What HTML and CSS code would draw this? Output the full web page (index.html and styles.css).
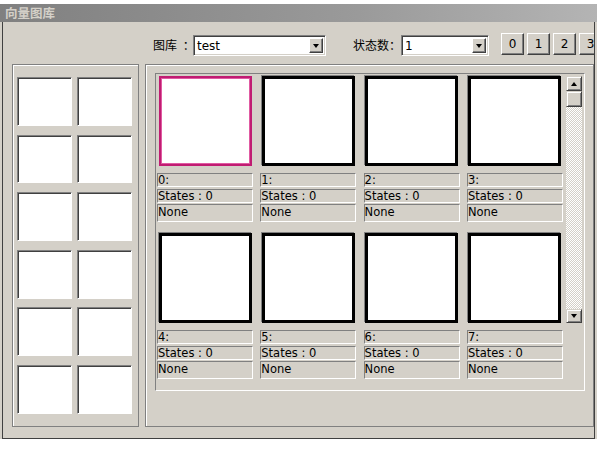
FILE: index.html
```html
<!DOCTYPE html>
<html lang="zh">
<head>
<meta charset="utf-8">
<title>向量图库</title>
<link rel="stylesheet" href="styles.css">
</head>
<body>
<div class="topstrip"></div>
<div class="window">
  <div class="titlebar"><span class="title">向量图库</span></div>
  <div class="client">
    <div class="toolbar">
      <span class="lbl lbl-lib">图库 ：</span>
      <div class="select sel-lib"><span class="sel-text">test</span><span class="sel-btn"><span class="tri-down"></span></span></div>
      <span class="lbl lbl-state">状态数：</span>
      <div class="select sel-state"><span class="sel-text">1</span><span class="sel-btn"><span class="tri-down"></span></span></div>
      <div class="btns">
        <button class="btn">0</button>
        <button class="btn">1</button>
        <button class="btn">2</button>
        <button class="btn">3</button>
      </div>
    </div>
    <div class="panels">
      <div class="group left">
        <div class="tiles">
          <div class="tile"></div><div class="tile"></div>
          <div class="tile"></div><div class="tile"></div>
          <div class="tile"></div><div class="tile"></div>
          <div class="tile"></div><div class="tile"></div>
          <div class="tile"></div><div class="tile"></div>
          <div class="tile"></div><div class="tile"></div>
        </div>
      </div>
      <div class="group right">
        <div class="frame">
          <div class="cards">
            <div class="card"><div class="thumb selected"></div><div class="cl c1">0:</div><div class="cl c2">States : 0</div><div class="cl c3">None</div></div>
            <div class="card"><div class="thumb"></div><div class="cl c1">1:</div><div class="cl c2">States : 0</div><div class="cl c3">None</div></div>
            <div class="card"><div class="thumb"></div><div class="cl c1">2:</div><div class="cl c2">States : 0</div><div class="cl c3">None</div></div>
            <div class="card"><div class="thumb"></div><div class="cl c1">3:</div><div class="cl c2">States : 0</div><div class="cl c3">None</div></div>
            <div class="card"><div class="thumb"></div><div class="cl c1">4:</div><div class="cl c2">States : 0</div><div class="cl c3">None</div></div>
            <div class="card"><div class="thumb"></div><div class="cl c1">5:</div><div class="cl c2">States : 0</div><div class="cl c3">None</div></div>
            <div class="card"><div class="thumb"></div><div class="cl c1">6:</div><div class="cl c2">States : 0</div><div class="cl c3">None</div></div>
            <div class="card"><div class="thumb"></div><div class="cl c1">7:</div><div class="cl c2">States : 0</div><div class="cl c3">None</div></div>
          </div>
          <div class="scrollbar">
            <div class="sb-btn sb-up"><span class="tri-up"></span></div>
            <div class="sb-thumb"></div>
            <div class="sb-track"></div>
            <div class="sb-btn sb-down"><span class="tri-down"></span></div>
          </div>
        </div>
      </div>
    </div>
  </div>
</div>
</body>
</html>
```
FILE: styles.css
```css
* { box-sizing: border-box; }
html, body { margin: 0; padding: 0; background: #fff; }
body {
  width: 597px;
  height: 457px;
  overflow: hidden;
  font-family: "DejaVu Sans", "Noto Sans CJK SC", sans-serif;
  font-size: 11px;
  color: #000;
}
.topstrip { height: 4px; background: #fff; }
.window { width: 597px; background: #d4d0c8; }
.titlebar {
  height: 18px;
  background: linear-gradient(to right, #808080 0%, #9a9a9a 60%, #b4b4b4 100%);
  display: flex;
  align-items: center;
  padding-left: 5px;
}
.title {
  font-family: "Noto Sans CJK SC", sans-serif;
  font-weight: bold;
  font-size: 12.5px;
  color: #d4d0c8;
  line-height: 18px;
}
.client {
  margin: 0 2px 0 2px;
  border-left: 1px solid #404040;
  border-right: 1px solid #404040;
  border-bottom: 1px solid #404040;
  padding: 11px 0 11px 9px;
  overflow: hidden;
  height: 417px;
}
.toolbar {
  display: flex;
  align-items: flex-start;
  height: 23px;
  margin-left: 141px;
  white-space: nowrap;
}
.toolbar > * { flex-shrink: 0; }
.lbl {
  font-family: "Noto Sans CJK SC", sans-serif;
  font-size: 12px;
  line-height: 16px;
  margin-top: 4px;
}
.lbl-lib { width: 40px; word-spacing: 3px; }
.lbl-state { width: 48px; margin-left: 27px; }
.select {
  margin-top: 2px;
  height: 21px;
  background: #fff;
  border: 1px solid;
  border-color: #808080 #fff #fff #808080;
  box-shadow: inset 1px 1px 0 #404040, inset -1px -1px 0 #d4d0c8;
  display: flex;
  align-items: stretch;
  padding: 2px;
}
.sel-lib { width: 133px; }
.sel-state { width: 88px; }
.sel-text {
  flex: 1;
  font-size: 12px;
  line-height: 16px;
  padding-left: 1px;
}
.sel-btn {
  width: 14px;
  background: #d4d0c8;
  border: 1px solid;
  border-color: #fff #404040 #404040 #fff;
  box-shadow: inset -1px -1px 0 #808080;
  display: flex;
  align-items: center;
  justify-content: center;
}
.tri-down {
  width: 0; height: 0;
  border-left: 3.5px solid transparent;
  border-right: 3.5px solid transparent;
  border-top: 4px solid #000;
}
.tri-up {
  width: 0; height: 0;
  border-left: 3.5px solid transparent;
  border-right: 3.5px solid transparent;
  border-bottom: 4px solid #000;
}
.btns {
  display: flex;
  gap: 3px;
  margin-left: 12px;
}
.btn {
  flex-shrink: 0;
  width: 23px;
  height: 22px;
  padding: 0;
  margin: 0;
  background: #d4d0c8;
  border: 1px solid;
  border-color: #fff #404040 #404040 #fff;
  box-shadow: inset -1px -1px 0 #808080;
  font-family: "DejaVu Sans", sans-serif;
  font-size: 12px;
  color: #000;
  line-height: 18px;
}
.panels {
  display: flex;
  gap: 6px;
  margin-top: 8px;
  height: 363px;
}
.group {
  flex-shrink: 0;
  height: 363px;
  border: 1px solid #808080;
  box-shadow: inset 1px 1px 0 #fff;
}
.left { width: 127px; padding: 12px 0 0 4px; }
.right { width: 449px; padding: 8px 0 0 9px; }
.tiles {
  display: grid;
  grid-template-columns: 55px 55px;
  grid-auto-rows: 48.8px;
  column-gap: 5px;
  row-gap: 8.8px;
}
.tile {
  background: #fff;
  border: 1px solid;
  border-color: #808080 #fff #fff #808080;
  box-shadow: inset 1px 1px 0 #404040;
}
.frame {
  width: 430px;
  height: 318px;
  border: 1px solid;
  border-color: #808080 #fff #fff #808080;
  padding: 2px 1px 0 1px;
  display: flex;
  align-items: flex-start;
}
.cards {
  display: grid;
  grid-template-columns: repeat(4, 96px);
  column-gap: 7.3px;
  row-gap: 11px;
}
.card { width: 96px; }
.thumb {
  width: 93px;
  height: 90px;
  margin: 0 auto;
  background: #fff;
  border: 3px solid #000;
  box-shadow: -1px -1px 0 #808080;
}
.thumb.selected {
  border: 2px solid #c01c72;
  box-shadow: inset 0 0 0 1px #e05aa2;
}
.cl {
  border: 1px solid;
  border-color: #808080 #fff #fff #808080;
  line-height: 13px;
  white-space: nowrap;
  padding-left: 0;
  font-size: 11.5px;
}
.c1 { height: 14px; margin-top: 7px; }
.c2 { height: 14px; margin-top: 2px; }
.c3 { height: 18px; margin-top: 1px; line-height: 15px; }
.scrollbar {
  flex-shrink: 0;
  width: 16px;
  height: 247px;
  margin-left: 3px;
  display: flex;
  flex-direction: column;
}
.sb-btn, .sb-thumb {
  background: #d4d0c8;
  border: 1px solid;
  border-color: #d4d0c8 #404040 #404040 #d4d0c8;
  box-shadow: inset 1px 1px 0 #fff, inset -1px -1px 0 #808080;
  display: flex;
  align-items: center;
  justify-content: center;
}
.sb-up { height: 15px; }
.sb-thumb { height: 16px; }
.sb-track {
  flex: 1;
  background: repeating-conic-gradient(#fff 0 25%, #d4d0c8 0 50%) 0 0 / 2px 2px;
}
.sb-down { height: 14px; }
```
